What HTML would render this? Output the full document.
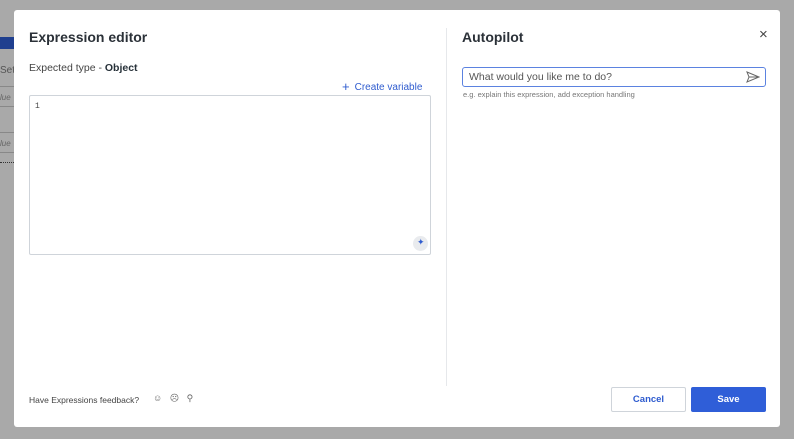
<!DOCTYPE html>
<html><head><style>
*{box-sizing:border-box;margin:0;padding:0}
body{width:794px;height:439px;background:#a9a9a9;font-family:"Liberation Sans",sans-serif;position:relative;overflow:hidden;color:#273139}
.a{position:absolute}
</style></head><body>
<div class="a" style="left:0;top:37px;width:14px;height:12px;background:#1f3f8f"></div>
<div class="a" style="left:0;top:65px;font-size:10px;color:#555">Set</div>
<div class="a" style="left:0;top:86px;width:14px;border-top:1px solid #888"></div>
<div class="a" style="left:0;top:93px;font-size:8px;color:#666;font-style:italic">lue</div>
<div class="a" style="left:0;top:106px;width:14px;border-top:1px solid #888"></div>
<div class="a" style="left:0;top:132px;width:14px;border-top:1px solid #888"></div>
<div class="a" style="left:0;top:139px;font-size:8px;color:#666;font-style:italic">lue</div>
<div class="a" style="left:0;top:152px;width:14px;border-top:1px solid #888"></div>
<div class="a" style="left:0;top:162px;width:14px;border-top:1px dotted #333"></div>

<div class="a" style="left:14px;top:10px;width:766px;height:417px;background:#fff;border-radius:3px"></div>
<div class="a" style="left:29px;top:29px;font-size:14px;font-weight:bold;color:#2b3138">Expression editor</div>
<div class="a" style="left:29px;top:62px;font-size:10.5px;color:#444">Expected type - <b style="color:#273139">Object</b></div>
<div class="a" style="left:342px;top:78px;font-size:10px;color:#2f5ccf"><span style="font-size:13px;margin-right:5px;position:relative;top:1px">+</span>Create variable</div>
<div class="a" style="left:29px;top:95px;width:402px;height:160px;border:1px solid #cfd4da;border-radius:2px"></div>
<div class="a" style="left:35px;top:102px;font-family:'Liberation Mono',monospace;font-size:8px;color:#444">1</div>
<div class="a" style="left:413px;top:236px;width:15px;height:15px;border-radius:50%;background:#e9ebee"></div>
<div class="a" style="left:417px;top:237px;font-size:9px;color:#2f5ccf">✦</div>
<div class="a" style="left:446px;top:28px;width:1px;height:358px;background:#e6e8eb"></div>
<div class="a" style="left:462px;top:29px;font-size:14px;font-weight:bold;color:#2b3138">Autopilot</div>
<div class="a" style="left:759px;top:26px;font-size:15px;color:#444">×</div>
<div class="a" style="left:462px;top:67px;width:304px;height:20px;border:1.5px solid #5b82e0;border-radius:3px"></div>
<div class="a" style="left:469px;top:71px;font-size:10.5px;color:#555">What would you like me to do?</div>
<svg class="a" style="left:746px;top:71px" width="14" height="12" viewBox="0 0 14 12"><path d="M1 1 L13 6 L1 11 L3 6 Z M3 6 H13" fill="none" stroke="#666" stroke-width="1"/></svg>
<div class="a" style="left:463px;top:90px;font-size:7.5px;color:#777">e.g. explain this expression, add exception handling</div>
<div class="a" style="left:29px;top:395px;font-size:8.5px;color:#444">Have Expressions feedback?</div>
<div class="a" style="left:153px;top:393px;font-size:9px;color:#666">☺&nbsp;&nbsp;&nbsp;☹&nbsp;&nbsp;&nbsp;⚲</div>
<div class="a" style="left:611px;top:387px;width:75px;height:25px;border:1px solid #cfd4da;border-radius:2px;font-size:9.5px;font-weight:bold;color:#2f5ccf;text-align:center;line-height:23px">Cancel</div>
<div class="a" style="left:691px;top:387px;width:75px;height:25px;background:#2f5ed8;border-radius:2px;font-size:9.5px;font-weight:bold;color:#fff;text-align:center;line-height:25px">Save</div>
</body></html>
